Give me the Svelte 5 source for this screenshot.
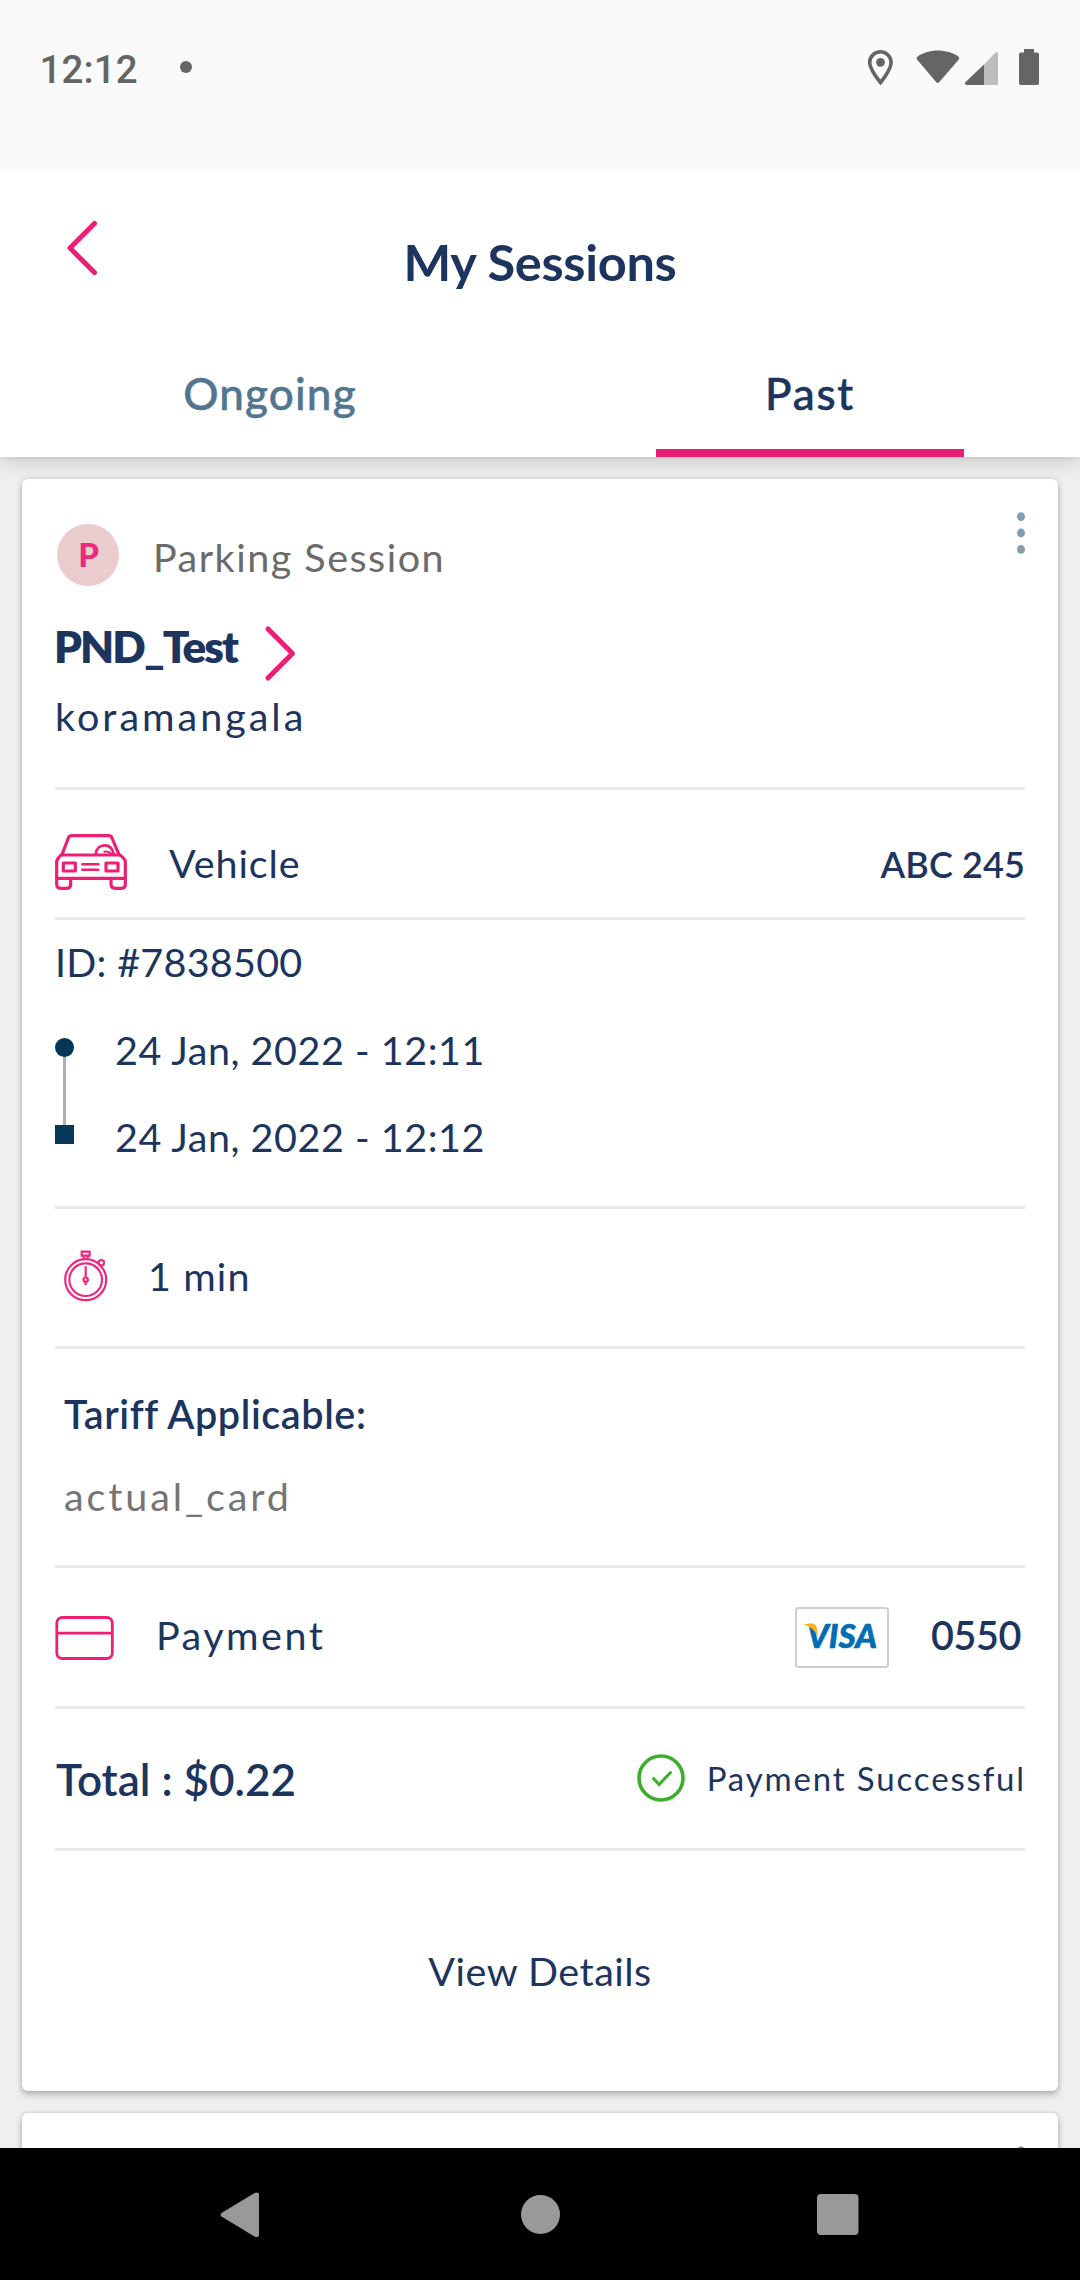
<script>
  const times = ['24 Jan, 2022 - 12:11', '24 Jan, 2022 - 12:12'];
</script>

{#snippet kebab()}
  <button class="kebab" aria-label="More options">
    <svg width="8" height="44" viewBox="0 0 8 44" fill="#829cb2">
      <ellipse cx="4" cy="4.6" rx="4" ry="4.4" />
      <ellipse cx="4" cy="21" rx="4" ry="4.4" />
      <ellipse cx="4" cy="37.4" rx="4" ry="4.4" />
    </svg>
  </button>
{/snippet}

<div class="screen">
  <div class="status">
    <span class="clock">12:12</span>
    <span class="dot"></span>
    <svg class="status-icons" width="176" height="40" viewBox="864 47 176 40" fill="#656565">
      <path
        d="M880.5 51.8c-6 0-10.8 4.7-10.8 10.7 0 7.3 10.8 20 10.8 20s10.6-12.700 10.600-20c0-6-4.700-10.700-10.600-10.700z"
        fill="none" stroke="#656565" stroke-width="3.600" />
      <circle cx="880.5" cy="62.300" r="4.400" />
      <path d="M917 59.500q-1.300-1.700.6-3.100c5.500-3.700 12.500-5.900 20.300-5.900s15 2.200 20.400 5.900q1.800 1.400.5 3.100L939.600 81.800q-1.800 2.200-3.700 0z" />
      <path d="M984 64.500V85h-17.500q-2.800-.8-1-3z" />
      <path d="M984 64.500l11.500-12q2.500-1.300 2.500 1.500v29.500q0 1.500-1.500 1.500H984z" fill="#bebebe" />
      <path d="M1024 49h10v3.600h3.200q1.800 0 1.800 1.800v28.800q0 1.800-1.800 1.800h-16.400q-1.800 0-1.800-1.800V54.400q0-1.800 1.800-1.800h3.200z" />
    </svg>
  </div>

  <header class="header">
    <div class="titlebar">
      <button class="back" aria-label="Back">
        <svg width="34" height="58" viewBox="0 0 34 58" fill="none" stroke="#ec1e75" stroke-width="5" stroke-linecap="round" stroke-linejoin="round">
          <path d="M28.500 4.500L4 29 28.500 53.500" />
        </svg>
      </button>
      <h1>My Sessions</h1>
    </div>
    <nav class="tabs">
      <div class="tab"><span class="ongoing">Ongoing</span></div>
      <div class="tab active"><span class="past">Past</span></div>
    </nav>
  </header>

  <main class="list">
    <article class="card">
      <section class="place">
        <div class="type">
          <span class="badge">P</span>
          <span class="type-name">Parking Session</span>
          {@render kebab()}
        </div>
        <div class="name">
          <h2>PND_Test</h2>
          <svg width="34" height="58" viewBox="0 0 34 58" fill="none" stroke="#ec1e75" stroke-width="5" stroke-linecap="round" stroke-linejoin="round">
            <path d="M5 4L29.500 28.500 5 53" />
          </svg>
        </div>
        <p class="area">koramangala</p>
      </section>

      <section class="vehicle">
        <svg width="72" height="56" viewBox="17 27 216 168" fill="none" stroke="#ec1e75" stroke-width="9.500" stroke-linejoin="round" stroke-linecap="round">
          <path d="M38 89L57 39Q60 32 67 32H178Q185 32 188 39L209 89" />
          <path d="M22 160V110Q22 106 27 99L35 90H213L222 99Q228 106 228 110V160Z" />
          <path d="M22 160V177Q22 190 34 190H51Q64 190 64 177V160M185 160V177Q185 190 198 190H216Q228 190 228 177V160" />
          <path d="M42 114H78V138H42ZM170 114H206V138H170Z" />
          <path d="M99 118H147M99 134H147" stroke-width="7.500" />
          <path d="M139 87C141 70 152 61 166 61S190 71 193 87" stroke-width="8" />
          <path d="M165 80Q178 78 188 87" stroke-width="6" />
        </svg>
        <span class="vehicle-label">Vehicle</span>
        <span class="plate">ABC 245</span>
      </section>

      <section class="period">
        <p class="id">ID: #7838500</p>
        <div class="timeline">
          <svg width="19" height="106" viewBox="0 0 19 106">
            <path d="M9.500 10V90" stroke="#b0b0b0" stroke-width="3" />
            <circle cx="9.500" cy="9.500" r="9.500" fill="#063759" />
            <path d="M0 87H19V106H0Z" fill="#063759" />
          </svg>
          <div class="times">
            {#each times as time}
              <p>{time}</p>
            {/each}
          </div>
        </div>
      </section>

      <section class="duration">
        <svg width="44" height="52" viewBox="26 28 132 156" fill="none" stroke="#ec2a7b" stroke-width="6.500">
          <circle cx="91" cy="117" r="61.500" />
          <circle cx="91" cy="117" r="49" />
          <path d="M79 33H103V45H79ZM85 45V55M97 45V55M91 77V110M91 124V133" />
          <circle cx="91" cy="117" r="6.500" />
          <circle cx="138" cy="66" r="8" />
          <path d="M131 72L139 79" />
        </svg>
        <span>1 min</span>
      </section>

      <section class="tariff">
        <h3>Tariff Applicable:</h3>
        <p>actual_card</p>
      </section>

      <section class="payment">
        <svg width="59" height="44" viewBox="0 0 59 44" fill="none" stroke="#ec1e75" stroke-width="2.800">
          <rect x="1.800" y="1.500" width="55.500" height="41" rx="5.500" />
          <path d="M2 17.200H57" />
        </svg>
        <span class="payment-label">Payment</span>
        <svg class="visa" width="94" height="61" viewBox="0 0 94 61">
          <rect x="1" y="1" width="92" height="59" rx="2.500" fill="#fff" stroke="#cecece" stroke-width="2" />
          <text x="12" y="41" textLength="70" lengthAdjust="spacingAndGlyphs">VISA</text>
          <path d="M9 17H18.500Q21 17 21.600 19.500L23.200 29.500Q18.500 20.500 9 17.500Z" fill="#fbb01f" />
        </svg>
        <span class="last4">0550</span>
      </section>

      <section class="total">
        <h3>Total : $0.22</h3>
        <svg width="48" height="48" viewBox="0 0 48 48" fill="none" stroke="#3dae2b">
          <circle cx="24" cy="24" r="22" stroke-width="3.600" />
          <path d="M16.500 24.500L22 30.500L33.500 18.500" stroke-width="3" stroke-linecap="round" />
        </svg>
        <span class="result">Payment Successful</span>
      </section>

      <button class="details">View Details</button>
    </article>

    <article class="card next">{@render kebab()}</article>
  </main>

  <footer class="sysnav">
    <svg width="1080" height="132" viewBox="0 0 1080 132" fill="#999">
      <path d="M221.500 68.500q-1.800-1.800 0-3.600L254.500 45q4.500-1.500 4.500 1.500v40.500q0 3-4.500 1.500z" />
      <circle cx="540.500" cy="66.500" r="19.500" />
      <rect x="817" y="46" width="41.500" height="41" rx="4" />
    </svg>
  </footer>
</div>

<style>
  :global(body) {
    background: #efefef;
  }
  .screen {
    width: 1080px;
    height: 2280px;
    display: flex;
    flex-direction: column;
    overflow: hidden;
    background: #efefef;
    color: #1d355e;
    font-family: Lato, 'Open Sans', sans-serif;
    font-size: 39.5px;
    line-height: 48px;
  }
  .screen * {
    box-sizing: border-box;
  }
  h1, h2, h3, p {
    margin: 0;
  }
  svg {
    display: block;
    flex: none;
  }
  button {
    padding: 0;
    border: 0;
    background: none;
    color: inherit;
    font: inherit;
    display: block;
  }

  .status {
    height: 171px;
    flex: none;
    display: flex;
    align-items: flex-start;
    padding: 47px 40px 0 39.5px;
    background: #fafafa;
    position: relative;
    z-index: 2;
  }
  .clock {
    width: 97.5px;
    color: #656565;
    font: 500 38.5px/45px Roboto, sans-serif;
    letter-spacing: 0.1px;
  }
  .dot {
    width: 12px;
    height: 12px;
    margin: 14px 0 0 43px;
    border-radius: 50%;
    background: #656565;
  }
  .status-icons {
    margin-left: auto;
  }

  .header {
    height: 286px;
    flex: none;
    background: #fff;
    position: relative;
    z-index: 1;
    box-shadow: 0 4px 20px rgba(0, 0, 0, 0.16), 0 1px 4px rgba(0, 0, 0, 0.08);
  }
  .titlebar {
    height: 176px;
    display: grid;
    grid-template-columns: 130px 1fr 130px;
    align-items: start;
  }
  .back {
    padding: 48px 0 0 66px;
  }
  h1 {
    padding-top: 61px;
    text-align: center;
    font-size: 50.5px;
    line-height: 60px;
    font-weight: 700;
    letter-spacing: -0.3px;
  }
  .tabs {
    height: 110px;
    display: grid;
    grid-template-columns: 1fr 1fr;
  }
  .tab {
    width: 308px;
    justify-self: center;
    padding-top: 20px;
    text-align: center;
    font-size: 44px;
    font-weight: 500;
    line-height: 52px;
    color: #52768f;
  }
  .active {
    border-bottom: 8px solid #e81e76;
    color: #1d355e;
  }
  .ongoing {
    letter-spacing: 1.15px;
    -webkit-text-stroke: 0.5px;
  }
  .past {
    letter-spacing: 1.8px;
    -webkit-text-stroke: 0.5px;
  }

  .list {
    height: 1691px;
    flex: none;
    overflow: hidden;
    padding: 22px 22px 0;
    display: flex;
    flex-direction: column;
    gap: 22px;
  }
  .card {
    height: 1612px;
    flex: none;
    padding: 0 33px;
    background: #fff;
    border-radius: 6px;
    box-shadow: 0 4px 7px rgba(0, 0, 0, 0.22), 0 0 5px rgba(0, 0, 0, 0.14);
  }
  section {
    border-bottom: 3px solid #e9e9e9;
    display: flex;
    align-items: center;
  }
  .kebab {
    margin-left: auto;
  }

  .place {
    height: 311px;
    flex-direction: column;
    align-items: stretch;
  }
  .type {
    display: flex;
    align-items: flex-start;
    padding-top: 33px;
  }
  .badge {
    width: 62px;
    height: 62px;
    margin: 12px 34px 0 2px;
    border-radius: 50%;
    background: #ebcdd0;
    color: #ee2a7f;
    font-size: 33px;
    font-weight: 900;
    line-height: 61px;
    text-align: center;
    padding-left: 1px;
  }
  .type-name {
    padding-top: 21px;
    color: #6b6b6b;
    letter-spacing: 1.5px;
  }
  .name {
    display: flex;
    align-items: flex-start;
    margin-top: 33px;
    gap: 26px;
  }
  h2 {
    margin: 1px 0 0 -1px;
    font-size: 44px;
    line-height: 52px;
    font-weight: 800;
    letter-spacing: -1.900px;
  }
  .name svg {
    margin-top: 6px;
  }
  .area {
    margin-top: 9px;
    letter-spacing: 3px;
  }

  .vehicle {
    height: 130px;
    padding-top: 17px;
  }
  .vehicle-label {
    margin-left: 42px;
    padding-top: 2px;
    letter-spacing: 0.9px;
  }
  .plate {
    margin-left: auto;
    padding-top: 3px;
    font-size: 36px;
    font-weight: 600;
    letter-spacing: 0.1px;
  }

  .period {
    height: 289px;
    flex-direction: column;
    align-items: stretch;
    padding-top: 18px;
  }
  .id {
    letter-spacing: 0.26px;
  }
  .timeline {
    display: flex;
    align-items: flex-start;
    gap: 41px;
    padding-top: 40px;
  }
  .timeline svg {
    margin-top: 12px;
  }
  .times {
    display: grid;
    gap: 39px;
    letter-spacing: 0.52px;
  }

  .duration {
    height: 140px;
    padding: 0 0 3px 9px;
    gap: 40px;
    letter-spacing: 1.1px;
  }

  .tariff {
    height: 219px;
    flex-direction: column;
    align-items: stretch;
    padding: 41px 0 0 9px;
    gap: 34px;
  }
  h3 {
    font-size: inherit;
    font-weight: 600;
    letter-spacing: 0.6px;
  }
  .tariff p {
    color: #757575;
    letter-spacing: 2.9px;
  }

  .payment {
    height: 141px;
  }
  .payment > svg:first-child {
    margin: 1px 0 0 0;
  }
  .payment-label {
    margin: -5px 0 0 42px;
    letter-spacing: 2.5px;
  }
  .visa {
    margin-left: auto;
  }
  .visa text {
    font: italic 900 33px Lato, sans-serif;
    fill: #006db4;
    stroke: #006db4;
    stroke-width: 0.6px;
  }
  .last4 {
    margin: -4px 4px 0 42px;
    font-weight: 600;
    letter-spacing: -0.4px;
  }

  .total {
    height: 142px;
  }
  .total h3 {
    margin: 1px 0 0 1px;
    font-size: 44px;
    line-height: 52px;
    letter-spacing: 0;
  }
  .total svg {
    margin: -2px 0 0 auto;
  }
  .result {
    margin: -1px -1px 0 22px;
    font-size: 33px;
    letter-spacing: 1.85px;
  }

  .details {
    width: 100%;
    height: 240px;
    text-align: center;
    letter-spacing: 0.5px;
  }

  .next {
    padding-top: 33px;
  }

  .sysnav {
    height: 132px;
    flex: none;
    background: #000;
  }
</style>
